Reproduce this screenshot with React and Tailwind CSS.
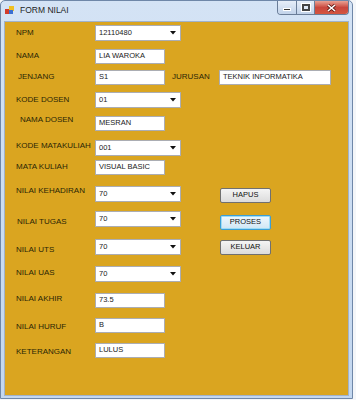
// App.jsx
// WinForms "FORM NILAI" window, Windows 7 style, gold client area.

const font = "font-['Liberation_Sans',Arial,sans-serif]";

function Combo({ value }) {
  return (
    <div className="flex h-[16px] w-[86px] items-center justify-between border border-[#abadb3] bg-white pl-[3px] pr-[4px] text-[7.5px] text-[#1a1a1a]">
      <span>{value}</span>
      <svg width="6" height="4" viewBox="0 0 6 4">
        <path d="M0 0H6L3 3.5Z" fill="#111" />
      </svg>
    </div>
  );
}

function Box({ value, w = "w-[70px]" }) {
  return (
    <div className={`flex h-[15px] ${w} items-center border border-[#abadb3] bg-white pl-[3px] text-[7.5px] text-[#1a1a1a]`}>
      {value}
    </div>
  );
}

function Btn({ children, focus }) {
  return (
    <div
      className={`flex h-[15px] w-[51px] items-center justify-center rounded-[2px] border text-[7.5px] text-[#111] ${
        focus
          ? "border-[#3c9fd6] bg-gradient-to-b from-[#f0f8fd] to-[#cfe6f5] shadow-[inset_0_0_0_1px_#9fdcf5]"
          : "border-[#707070] bg-gradient-to-b from-[#f4f4f4] to-[#dcdcdc]"
      }`}
    >
      {children}
    </div>
  );
}

function Row({ mt, label, labelClass = "", children }) {
  return (
    <div className={`flex h-[16px] items-center pl-[11px] ${mt}`}>
      <div className={`w-[79px] whitespace-nowrap text-[8px] text-[#2a2606] ${labelClass}`}>{label}</div>
      {children}
    </div>
  );
}

export default function App() {
  return (
    <div className={`h-[400px] w-[356px] overflow-hidden bg-[#f4f6f9] ${font}`}>
      <div className="flex h-[399px] w-[353px] flex-col rounded-t-[5px] border border-[#6f87a8] bg-gradient-to-b from-[#d4e3f5] to-[#c3d7ef]">
        {/* title bar */}
        <div className="flex h-[19px] shrink-0 items-start">
          <div className="ml-[4px] mt-[5px] flex h-[9px] w-[9px] items-center justify-center">
            <svg width="9" height="9" viewBox="0 0 9 9">
              <rect x="0" y="3" width="5" height="5" fill="#d23b2b" />
              <rect x="4" y="0" width="5" height="5" fill="#f0c020" />
              <rect x="4" y="4" width="4" height="4" fill="#3b6fd0" />
            </svg>
          </div>
          <div className="ml-[6px] mt-[3px] text-[8.5px] text-[#1e1e1e]">FORM NILAI</div>
          <div className="ml-auto mr-[3px] flex h-[14px] overflow-hidden rounded-b-[4px] border border-t-0 border-[#6a7d98]">
            <div className="flex w-[19px] items-center justify-center border-r border-[#6a7d98] bg-gradient-to-b from-[#e6eef9] to-[#c2d3ea]">
              <div className="mt-[4px] h-[3px] w-[8px] border border-white bg-[#333]" />
            </div>
            <div className="flex w-[18px] items-center justify-center border-r border-[#6a7d98] bg-gradient-to-b from-[#e6eef9] to-[#c2d3ea]">
              <div className="h-[7px] w-[8px] border-[2px] border-[#444] bg-[#dfe8f4] shadow-[0_0_0_1px_#fff]" />
            </div>
            <div className="flex w-[33px] items-center justify-center bg-gradient-to-b from-[#e8a093] via-[#c9463d] to-[#d4553f]">
              <svg width="9" height="8" viewBox="0 0 9 8">
                <path d="M1 1L8 7M8 1L1 7" stroke="#5a1a14" strokeWidth="3" />
                <path d="M1 1L8 7M8 1L1 7" stroke="#fff" strokeWidth="1.6" />
              </svg>
            </div>
          </div>
        </div>

        {/* client area */}
        <div className="ml-[3px] mt-[1px] h-[375px] w-[345px] shrink-0 border border-[#9fb2cc] bg-[#daa520]">
          <Row mt="mt-[3px]" label="NPM">
            <Combo value="12110480" />
          </Row>
          <Row mt="mt-[7px]" label="NAMA">
            <Box value="LIA WAROKA" />
          </Row>
          <Row mt="mt-[5px]" label="JENJANG" labelClass="pl-[2px]">
            <Box value="S1" />
            <div className="ml-[7px] w-[47px] text-[8px] text-[#2a2606]">JURUSAN</div>
            <Box value="TEKNIK INFORMATIKA" w="w-[112px]" />
          </Row>
          <Row mt="mt-[7px]" label="KODE DOSEN">
            <Combo value="01" />
          </Row>
          <Row mt="mt-[7px]" label="NAMA DOSEN" labelClass="pl-[4px] -translate-y-[3px]">
            <Box value="MESRAN" />
          </Row>
          <Row mt="mt-[9px]" label="KODE MATAKULIAH" labelClass="-translate-y-[2px]">
            <Combo value="001" />
          </Row>
          <Row mt="mt-[3px]" label="MATA KULIAH">
            <Box value="VISUAL BASIC" />
          </Row>
          <Row mt="mt-[11px]" label="NILAI KEHADIRAN" labelClass="-translate-y-[3px]">
            <Combo value="70" />
            <div className="ml-[39px] translate-y-[1px]">
              <Btn>HAPUS</Btn>
            </div>
          </Row>
          <Row mt="mt-[9px]" label="NILAI TUGAS" labelClass="pl-[1px] translate-y-[3px]">
            <Combo value="70" />
            <div className="ml-[39px] translate-y-[3px]">
              <Btn focus>PROSES</Btn>
            </div>
          </Row>
          <Row mt="mt-[12px]" label="NILAI UTS" labelClass="translate-y-[3px]">
            <Combo value="70" />
            <div className="ml-[39px]">
              <Btn>KELUAR</Btn>
            </div>
          </Row>
          <Row mt="mt-[11px]" label="NILAI UAS" labelClass="-translate-y-[1px]">
            <Combo value="70" />
          </Row>
          <Row mt="mt-[10px]" label="NILAI AKHIR" labelClass="-translate-y-[1px]">
            <Box value="73.5" />
          </Row>
          <Row mt="mt-[9px]" label="NILAI HURUF" labelClass="translate-y-[2px]">
            <Box value="B" />
          </Row>
          <Row mt="mt-[9px]" label="KETERANGAN" labelClass="translate-y-[2px]">
            <Box value="LULUS" />
          </Row>
        </div>
      </div>
    </div>
  );
}
